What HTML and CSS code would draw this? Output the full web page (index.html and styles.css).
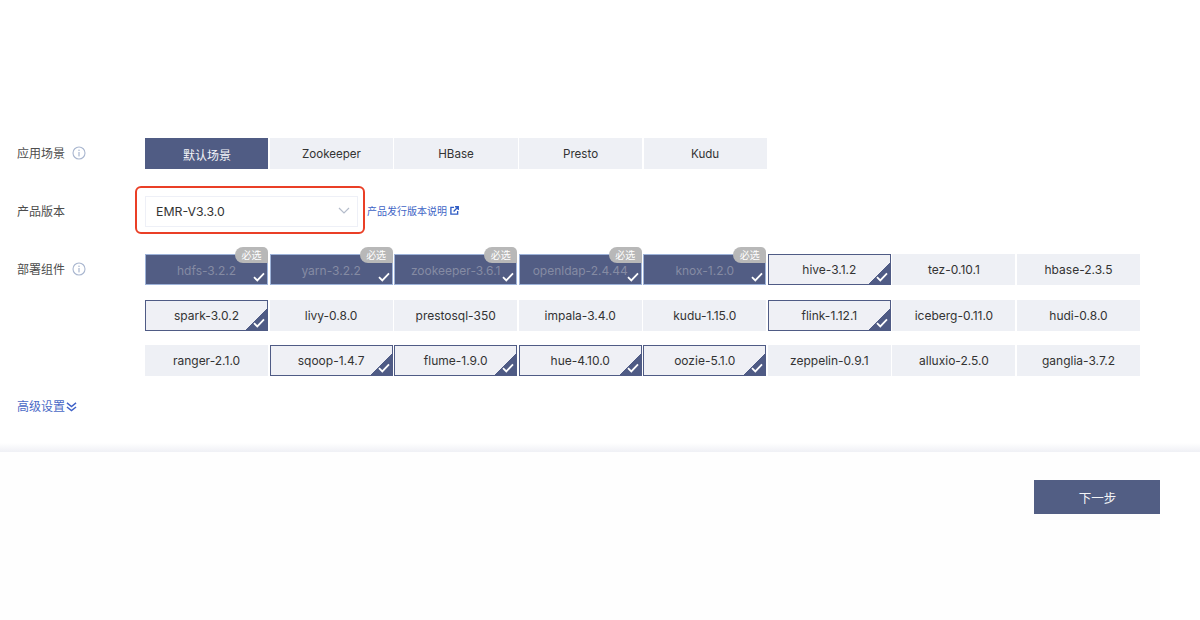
FILE: index.html
```html
<!DOCTYPE html>
<html lang="zh-CN">
<head>
<meta charset="utf-8">
<title>部署组件</title>
<link rel="stylesheet" href="styles.css">
</head>
<body>
<svg class="defs" width="0" height="0" aria-hidden="true">
  <symbol id="info" viewBox="0 0 14 14"><circle cx="7" cy="7" r="6" fill="none" stroke="currentColor" stroke-width="1.1"/><rect x="6.4" y="6" width="1.2" height="4.4" fill="currentColor"/><rect x="6.4" y="3.6" width="1.2" height="1.4" fill="currentColor"/></symbol>
  <symbol id="check" viewBox="0 0 12 10"><path d="M1 5.2 4.3 8.4 11 1.4" fill="none" stroke="#fff" stroke-width="1.8"/></symbol>
</svg>
<main class="form">
  <div class="field">
    <div class="label">应用场景<svg class="info"><use href="#info"/></svg></div>
    <div class="tabs">
      <div class="cell on">默认场景</div>
      <div class="cell">Zookeeper</div>
      <div class="cell">HBase</div>
      <div class="cell">Presto</div>
      <div class="cell">Kudu</div>
    </div>
  </div>
  <div class="field">
    <div class="label">产品版本</div>
    <div class="version">
      <div class="select">
        <span>EMR-V3.3.0</span>
        <svg class="chev" viewBox="0 0 12 7"><path d="M1 1 6 6 11 1" fill="none" stroke="#b4bccb" stroke-width="1.2"/></svg>
        <div class="mark"></div>
      </div>
      <a class="doc">产品发行版本说明<svg class="ext" viewBox="0 0 10 10"><path d="M4.5 1.5H1V9H8.5V5.5" fill="none" stroke="#2f5cc4" stroke-width="1.5"/><path d="M4 6 8.6 1.4M5.6 .8H9.2V4.4" fill="none" stroke="#2f5cc4" stroke-width="1.5"/></svg></a>
    </div>
  </div>
  <div class="field">
    <div class="label">部署组件<svg class="info"><use href="#info"/></svg></div>
    <div class="grid">
      <div class="cell must">hdfs-3.2.2<i class="badge">必选</i><svg class="tick"><use href="#check"/></svg></div>
      <div class="cell must">yarn-3.2.2<i class="badge">必选</i><svg class="tick"><use href="#check"/></svg></div>
      <div class="cell must">zookeeper-3.6.1<i class="badge">必选</i><svg class="tick"><use href="#check"/></svg></div>
      <div class="cell must">openldap-2.4.44<i class="badge">必选</i><svg class="tick"><use href="#check"/></svg></div>
      <div class="cell must">knox-1.2.0<i class="badge">必选</i><svg class="tick"><use href="#check"/></svg></div>
      <div class="cell sel">hive-3.1.2<svg class="tick"><use href="#check"/></svg></div>
      <div class="cell">tez-0.10.1</div>
      <div class="cell">hbase-2.3.5</div>
      <div class="cell sel">spark-3.0.2<svg class="tick"><use href="#check"/></svg></div>
      <div class="cell">livy-0.8.0</div>
      <div class="cell">prestosql-350</div>
      <div class="cell">impala-3.4.0</div>
      <div class="cell">kudu-1.15.0</div>
      <div class="cell sel">flink-1.12.1<svg class="tick"><use href="#check"/></svg></div>
      <div class="cell">iceberg-0.11.0</div>
      <div class="cell">hudi-0.8.0</div>
      <div class="cell">ranger-2.1.0</div>
      <div class="cell sel">sqoop-1.4.7<svg class="tick"><use href="#check"/></svg></div>
      <div class="cell sel">flume-1.9.0<svg class="tick"><use href="#check"/></svg></div>
      <div class="cell sel">hue-4.10.0<svg class="tick"><use href="#check"/></svg></div>
      <div class="cell sel">oozie-5.1.0<svg class="tick"><use href="#check"/></svg></div>
      <div class="cell">zeppelin-0.9.1</div>
      <div class="cell">alluxio-2.5.0</div>
      <div class="cell">ganglia-3.7.2</div>
    </div>
  </div>
  <a class="advanced">高级设置<svg class="dbl" viewBox="0 0 12 11"><path d="M1 1 6 5 11 1M1 5.5 6 9.5 11 5.5" fill="none" stroke="#3f62c8" stroke-width="1.6"/></svg></a>
</main>
<footer class="foot">
  <button class="next" type="button">下一步</button>
</footer>
</body>
</html>
```
FILE: styles.css
```css
* { box-sizing: border-box; }
html, body { margin: 0; height: 620px; overflow: hidden; background: #fff; }
body { font-family: Inter, "Noto Sans CJK SC", sans-serif; font-size: 12px; color: #333; }
.defs { position: absolute; }

.form { height: 452px; padding: 138px 60px 0 17px; display: flex; flex-direction: column; gap: 27px;
  background: linear-gradient(to bottom, #fff 443px, #eff0f5 452px); }
.field { display: flex; }
.label { width: 128px; flex: none; height: 29px; display: flex; align-items: center; gap: 7px;
  font-size: 12px; color: #4d4d4d; }
.field:first-child .label { height: 29px; }
.info { width: 14px; height: 14px; color: #a9b6cf; }

.tabs { display: flex; gap: 1.5px; margin-left: .4px; }
.tabs .cell { width: 123.06px; padding-top: 1px; font-size: 11.6px; }
.grid { flex: 1; display: grid; grid-template-columns: repeat(8, 1fr); column-gap: 1.5px; row-gap: 14.5px; }

.cell { position: relative; height: 31px; display: flex; align-items: center; justify-content: center;
  background: #eef0f5; color: #333; white-space: nowrap; }
.tabs .cell.on { background: #505c84; color: #f2f3f7; font-size: 12px; }
.cell.must { background: #525d84; border: 1px solid #9db2d8; color: #858ba3; padding-top: 1px; }
.cell.sel { border: 1px solid #4f5b85;
  background: linear-gradient(135deg, #eff0f5 calc(100% - 15px), #4f5b85 calc(100% - 15px)); }

.tick { position: absolute; right: 2px; bottom: 2px; width: 12px; height: 10px; }
.badge { position: absolute; right: -1px; top: -8.5px; width: 33px; height: 16px; display: flex; align-items: center;
  justify-content: center; background: #b8b8b8; color: #fff; font-style: normal; font-size: 10px;
  border-radius: 8px 5px 0 8px; }

.version { display: flex; align-items: flex-start; gap: 9px; }
.select { position: relative; width: 213px; height: 31px; padding: 0 7px 0 10px; display: flex; align-items: center;
  justify-content: space-between; border: 1px solid #eef0f7; font-size: 12.3px; color: #333; background: #fff; }
.chev { width: 12px; height: 7px; margin: -2px 0 0 0; }
.mark { position: absolute; left: -11px; right: -8px; top: -11px; bottom: -8px; border: 2px solid #ea3f26; border-radius: 6px; }
.doc { display: flex; align-items: center; gap: 3px; height: 29px; font-size: 10px; color: #3f65c6; }
.ext { width: 9px; height: 9px; }

.advanced { display: flex; align-items: center; gap: 1px; margin-top: -6px; font-size: 12px; color: #4a69c6; }
.dbl { width: 11px; height: 10px; margin-top: 3px; }

.foot { width: 1160px; height: 168px; display: flex; justify-content: flex-end; padding-top: 28px; background: #fefefe; }
.next { width: 126px; height: 34px; padding: 0 0 0 1px; border: 0; background: #525e84; color: #f4f5f8;
  font-family: inherit; font-size: 12.5px; }
```
